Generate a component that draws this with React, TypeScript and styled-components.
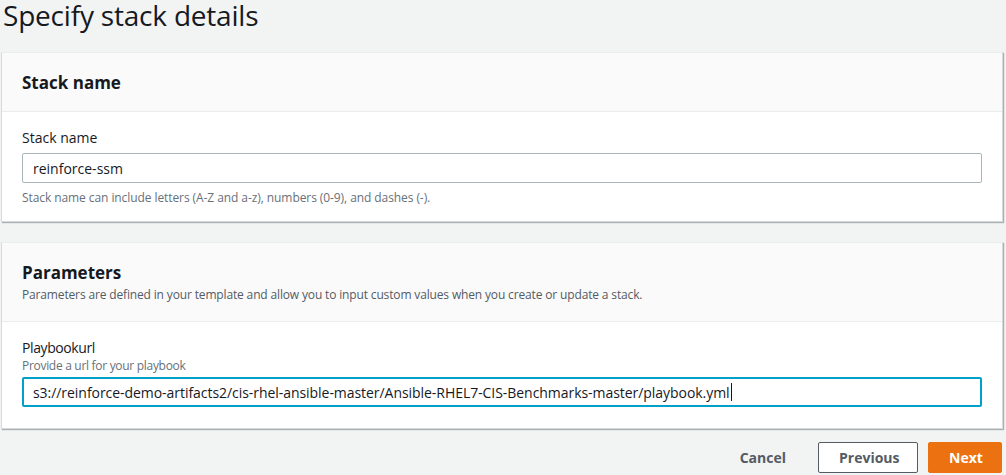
import styled, { createGlobalStyle } from "styled-components";

const GlobalStyle = createGlobalStyle`
  body {
    margin: 0;
    background: #f2f3f3;
    font-family: "Open Sans", "Liberation Sans", sans-serif;
    color: #16191f;
  }
`;

const Page = styled.div`
  width: 1006px;
  height: 475px;
  overflow: hidden;
  display: flex;
  flex-direction: column;
  padding: 0 3px 0 1px;
  box-sizing: border-box;
`;

const Title = styled.h1`
  margin: 0;
  padding: 0 0 0 2px;
  height: 52px;
  font-size: 28px;
  line-height: 30px;
  font-weight: 400;
  letter-spacing: -0.2px;
  color: #16191f;
`;

const Card = styled.section<{ $gap?: number }>`
  background: #fff;
  border: 1px solid #d5dbdb;
  border-top-color: #eaeded;
  box-shadow: 1px 1px 1px 0 rgba(0, 28, 36, 0.3);
  margin-bottom: ${(p) => p.$gap ?? 0}px;
`;

const CardHeader = styled.div<{ $h: number }>`
  height: ${(p) => p.$h}px;
  box-sizing: border-box;
  background: #fafafa;
  border-bottom: 1px solid #eaeded;
  padding: 18px 20px 0;
  display: flex;
  flex-direction: column;
`;

const CardTitle = styled.h2`
  margin: 0;
  font-size: 17px;
  line-height: 24px;
  font-weight: 700;
  color: #16191f;
`;

const CardDesc = styled.p`
  margin: 2px 0 0;
  font-size: 12px;
  line-height: 16px;
  color: #545b64;
  letter-spacing: -0.15px;
`;

const CardBody = styled.div<{ $h: number }>`
  height: ${(p) => p.$h}px;
  box-sizing: border-box;
  padding: 16px 20px 0;
`;

const Label = styled.div<{ $narrow?: boolean }>`
  font-size: 14px;
  line-height: 20px;
  color: #16191f;
  letter-spacing: ${(p) => (p.$narrow ? "-0.4px" : "0")};
`;

const Desc = styled.div`
  font-size: 12px;
  line-height: 16px;
  color: #687078;
  letter-spacing: -0.3px;
`;

const Input = styled.div<{ $focus?: boolean }>`
  margin-top: ${(p) => (p.$focus ? 3 : 5)}px;
  width: 960px;
  height: 30px;
  box-sizing: border-box;
  border: ${(p) => (p.$focus ? "2px solid #00a1c9" : "1px solid #aab7b8")};
  border-radius: 2px;
  padding: 0 ${(p) => (p.$focus ? 9 : 10)}px;
  display: flex;
  align-items: center;
  font-size: 14px;
  color: #16191f;
  letter-spacing: ${(p) => (p.$focus ? "-0.05px" : "0")};
  white-space: nowrap;
`;

const Caret = styled.span`
  display: inline-block;
  width: 1px;
  height: 18px;
  background: #16191f;
  margin-left: 1px;
`;

const Hint = styled.div`
  margin-top: 7px;
  font-size: 12px;
  line-height: 16px;
  color: #687078;
  letter-spacing: -0.08px;
`;

const Footer = styled.div`
  display: flex;
  justify-content: flex-end;
  align-items: center;
  gap: 10px;
  padding: 13px 1px 0 0;
`;

const Button = styled.button<{ $variant: "link" | "normal" | "primary" }>`
  height: 31px;
  box-sizing: border-box;
  font-family: "Open Sans", "Liberation Sans", sans-serif;
  font-size: 14px;
  font-weight: 700;
  border-radius: 2px;
  cursor: pointer;
  padding: 0 20px;
  ${(p) =>
    p.$variant === "primary"
      ? `background: #ec7211; border: 1px solid #ec7211; color: #fff; width: 74px;`
      : p.$variant === "normal"
      ? `background: #fff; border: 1px solid #545b64; color: #545b64; width: 100px;`
      : `background: transparent; border: 1px solid transparent; color: #545b64; margin-right: 1px;`}
`;

export default function App() {
  return (
    <>
      <GlobalStyle />
      <Page>
        <Title>Specify stack details</Title>
        <Card $gap={20}>
          <CardHeader $h={59}>
            <CardTitle>Stack name</CardTitle>
          </CardHeader>
          <CardBody $h={109}>
            <Label>Stack name</Label>
            <Input>reinforce-ssm</Input>
            <Hint>
              Stack name can include letters (A-Z and a-z), numbers (0-9), and
              dashes (-).
            </Hint>
          </CardBody>
        </Card>
        <Card>
          <CardHeader $h={79}>
            <CardTitle>Parameters</CardTitle>
            <CardDesc>
              Parameters are defined in your template and allow you to input
              custom values when you create or update a stack.
            </CardDesc>
          </CardHeader>
          <CardBody $h={106}>
            <Label $narrow>Playbookurl</Label>
            <Desc>Provide a url for your playbook</Desc>
            <Input $focus>
              s3://reinforce-demo-artifacts2/cis-rhel-ansible-master/Ansible-RHEL7-CIS-Benchmarks-master/playbook.yml
              <Caret />
            </Input>
          </CardBody>
        </Card>
        <Footer>
          <Button $variant="link">Cancel</Button>
          <Button $variant="normal">Previous</Button>
          <Button $variant="primary">Next</Button>
        </Footer>
      </Page>
    </>
  );
}
